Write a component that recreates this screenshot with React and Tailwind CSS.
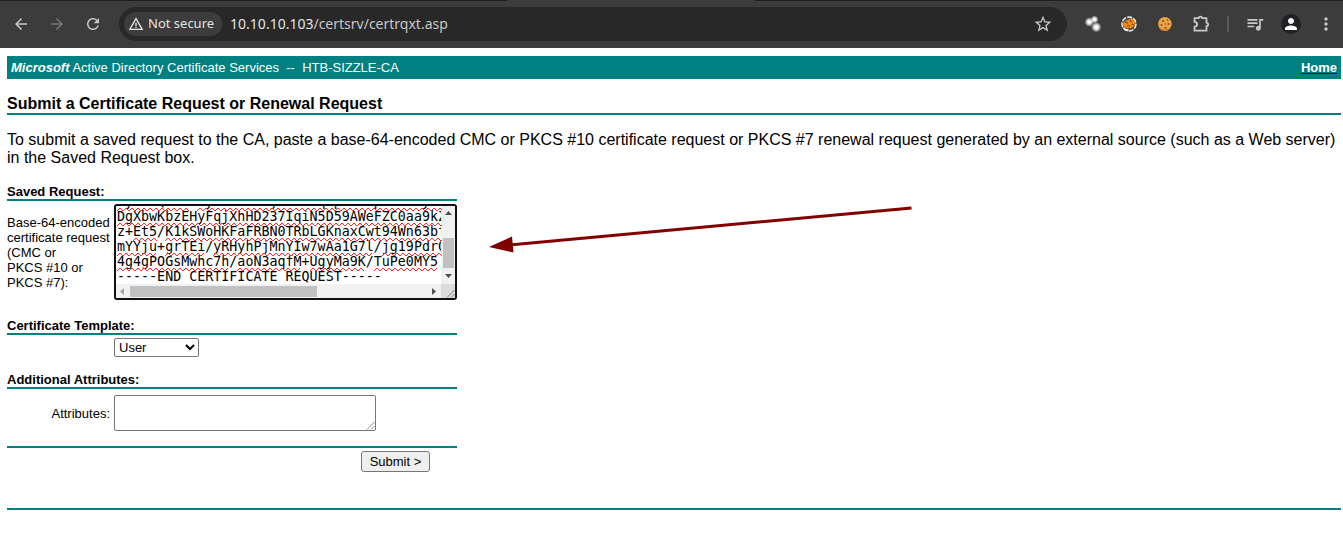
import { useEffect, useRef } from "react";
import { MdArrowBack, MdArrowForward, MdRefresh, MdWarningAmber, MdStarBorder, MdMoreVert, MdPerson, MdQueueMusic } from "react-icons/md";

const REQUEST_TEXT = [
  "-----BEGIN CERTIFICATE REQUEST-----",
  "MyX7bQzHT+dyKbTnR5WjaXeV1qZpLk8HpFzS3EydV",
  "DgXbwKbzEHyFqjXhHD237IqiN5D59AWeFZC0aa9kZ",
  "z+Et5/K1kSWoHKFaFRBN0TRbLGKnaxCwt94Wn63bf",
  "mYYju+grTEi/yRHyhPjMnYIw7wAa1G7l/jg19Pdr0",
  "4g4gPOGsMwhc7h/aoN3aqfM+UgyMa9K/TuPe0MY5",
  "-----END CERTIFICATE REQUEST-----",
].join("\n");

// Misspelled runs per line, as [first column, end column].
const SPELLING = [
  [[0, 9], [10, 41]],
  [[0, 41]],
  [[2, 5], [6, 41]],
  [[0, 5], [6, 11], [12, 32], [33, 41]],
  [[0, 14], [15, 23], [24, 31], [32, 40]],
];

function squiggle(start, end, y) {
  const x0 = Math.round(start * 8.03);
  const x1 = Math.round(end * 8.03);
  let d = `M${x0} ${y + 3}`;
  let up = true;
  for (let x = x0 + 3; x <= x1; x += 3) {
    d += `L${x} ${up ? y : y + 3}`;
    up = !up;
  }
  return d;
}

function IconButton({ label, children, dim }) {
  return (
    <button type="button" aria-label={label} className={`flex h-9 w-9 shrink-0 items-center justify-center ${dim ? "text-[#777777]" : "text-[#c7c7c7]"}`}>
      {children}
    </button>
  );
}

function Toolbar() {
  return (
    <header className="bg-[#3c3c3c]">
      <div className="flex h-px">
        <div className="w-[507px] bg-[#202020]" />
        <div className="w-[248px]" />
        <div className="flex-1 bg-[#202020]" />
      </div>
      <div className="flex h-[47px] items-center pb-px pl-[3px] font-['Noto_Sans',sans-serif]">
        <IconButton label="Back"><MdArrowBack size={18} /></IconButton>
        <IconButton label="Forward" dim><MdArrowForward size={18} /></IconButton>
        <IconButton label="Reload"><MdRefresh size={18} /></IconButton>
        <div className="mx-2 flex h-[34px] min-w-0 flex-1 items-center rounded-full bg-[#282828] pl-[5px] pr-[6px]">
          <button type="button" className="flex h-6 shrink-0 items-center gap-1 rounded-full bg-[#3c3c3c] pl-1 pr-2 text-[13px] text-[#e3e3e3]">
            <MdWarningAmber size={16} />
            Not secure
          </button>
          <div className="min-w-0 flex-1 truncate pl-2 text-sm text-[#c7c7c7]">
            <span className="text-[#e3e3e3]">10.10.10.103</span>/certsrv/certrqxt.asp
          </div>
          <IconButton label="Bookmark this page"><MdStarBorder size={20} /></IconButton>
        </div>
        <IconButton label="Proxy extension">
          <svg width="18" height="18" viewBox="0 0 18 18">
            <defs>
              <radialGradient id="ball">
                <stop offset="0.3" stopColor="#ffffff" />
                <stop offset="1" stopColor="#ffffff" stopOpacity="0.25" />
              </radialGradient>
            </defs>
            <circle cx="10.5" cy="4.5" r="3.6" fill="url(#ball)" />
            <circle cx="5.3" cy="7" r="4.3" fill="url(#ball)" />
            <circle cx="12.3" cy="12.2" r="4.7" fill="url(#ball)" />
          </svg>
        </IconButton>
        <IconButton label="Browser extension">
          <svg width="16" height="16" viewBox="0 0 16 16">
            <circle cx="8" cy="8" r="7" fill="#4a4a4a" stroke="#f4f4f4" strokeWidth="1.4" strokeDasharray="5 1.2" />
            <path d="M1.5 8.5 4 5l4-1.5 3-2 1.5 3 2 2-.5 3-3 2-3 1.5-4-1.5z" fill="#f18a12" />
            <path d="m4 6 3 1M9 4l1.500 2M6 10l3-.5M11 8l2 1M9 12l-2 1.500" stroke="#713b0b" strokeWidth="1.200" />
            <path d="M2 10.500 5 13l3 .5-1 1.500-3-1z" fill="#fff" />
          </svg>
        </IconButton>
        <IconButton label="Cookie editor">
          <svg width="16" height="16" viewBox="0 0 16 16">
            <path d="M8 1c2 0 2.500.8 4 1.300.5 1.400 2.300 1.800 2.300 3.500.5 2 .8 3-.4 4.900C13 13.500 10.500 15 8 15s-5.500-1.500-6.300-4.500C.8 8 .9 5 3.300 2.800 4.700 1.500 6.500 1 8 1z" fill="#eba445" />
            <path d="M2 11c2 2.500 8 3.500 12 0-1.500 3-4 4-6 4s-5-1.300-6-4z" fill="#cf7d2c" />
            <g fill="#8a4817">
              <circle cx="6" cy="5" r="1" />
              <circle cx="10.500" cy="4" r=".8" />
              <circle cx="11.500" cy="8" r="1" />
              <circle cx="4.500" cy="9" r=".9" />
              <circle cx="8.200" cy="8" r=".7" />
              <circle cx="8.500" cy="11.800" r="1" />
            </g>
          </svg>
        </IconButton>
        <IconButton label="Extensions">
          <svg width="18" height="18" viewBox="0 0 18 18" fill="none" stroke="currentColor" strokeWidth="1.800" strokeLinejoin="round">
            <path d="M2.500 3.200h4.300c0-2.200 3.400-2.200 3.400 0h4.300v4.600c2.200 0 2.200 3.200 0 3.200v4.700h-12v-4c3.500-.2 3.500-4.600 0-4.800z" />
          </svg>
        </IconButton>
        <div className="flex w-[18px] shrink-0 justify-center"><div className="h-4 w-0.5 bg-[#5c5c5c]" /></div>
        <IconButton label="Media controls"><MdQueueMusic size={20} /></IconButton>
        <IconButton label="Profile">
          <span className="flex h-5 w-5 items-center justify-center rounded-full bg-[#202124] text-white"><MdPerson size={18} /></span>
        </IconButton>
        <button type="button" aria-label="Menu" className="flex h-9 w-[34px] shrink-0 items-center justify-center text-[#c7c7c7]"><MdMoreVert size={20} /></button>
      </div>
    </header>
  );
}

function SectionTitle({ children }) {
  return <h2 className="border-b-2 border-[#008080] text-[13px] leading-[15px] font-bold">{children}</h2>;
}

function ScrollArrow({ points, dim }) {
  return (
    <svg width="13" height="13" viewBox="0 0 13 13" className={dim ? "text-[#a3a3a3]" : "text-[#505050]"} aria-hidden="true">
      <polygon points={points} fill="currentColor" />
    </svg>
  );
}

function RequestBox() {
  const ref = useRef(null);
  useEffect(() => {
    ref.current.scrollTop = ref.current.scrollHeight;
  }, []);
  return (
    <div className="grid grid-cols-[1fr_14px] overflow-hidden rounded-[3px] border-2 border-[#101010]">
      <div className="relative h-[78px]">
        <textarea
          id="request"
          ref={ref}
          wrap="off"
          spellCheck={false}
          defaultValue={REQUEST_TEXT}
          className="block h-full w-full resize-none overflow-hidden bg-white px-px font-['DejaVu_Sans_Mono',monospace] text-[13.333px] leading-[15px] text-black outline-none"
        />
        <svg className="pointer-events-none absolute top-0 left-px h-full w-full" aria-hidden="true">
          {SPELLING.map((runs, row) =>
            runs.map(([a, b]) => (
              <path key={`${row}-${a}`} d={squiggle(a, b, row * 15 + 2)} fill="none" stroke="#ff2a2a" strokeWidth="1" />
            ))
          )}
        </svg>
      </div>
      <div className="flex flex-col items-center bg-[#f1f1f1] pb-px">
        <ScrollArrow points="3,9 10,9 6.5,5" />
        <div className="flex w-full flex-1 flex-col justify-end pr-px pb-0.5 pl-0.5">
          <div className="h-[30px] bg-[#c1c1c1]" />
        </div>
        <ScrollArrow points="3,4 10,4 6.5,8" />
      </div>
      <div className="flex h-[14px] items-center bg-[#f1f1f1] pr-px">
        <ScrollArrow dim points="8,3 8,10 4,6.500" />
        <div className="flex-1">
          <div className="ml-px h-[11px] w-[187px] bg-[#c1c1c1]" />
        </div>
        <ScrollArrow points="5,3 5,10 9,6.500" />
      </div>
      <div className="flex items-end justify-end bg-[#dcdcdc]"><ResizeGrip /></div>
    </div>
  );
}

function ResizeGrip() {
  return (
    <svg width="9" height="9" viewBox="0 0 9 9" fill="none" stroke="#6b6b6b" strokeWidth="0.8" aria-hidden="true">
      <path d="M1 8.500 8.500 1M5 8.500 8.500 5" />
    </svg>
  );
}

export default function App() {
  return (
    <div className="min-h-screen bg-white font-['Liberation_Sans',Arial,sans-serif] text-black">
      <Toolbar />
      <main className="relative pt-2 pr-0.5 pl-[7px]">
        <div className="flex h-[23px] items-center justify-between bg-[#008080] px-1 text-[13px] text-white">
          <div className="whitespace-pre"><b><i>Microsoft</i></b> Active Directory Certificate Services{"  --  "}HTB-SIZZLE-CA</div>
          <a href="#home" className="font-bold underline decoration-[#0000ee]">Home</a>
        </div>
        <h1 className="mt-4 border-b-2 border-[#008080] text-base leading-[18px] font-bold">Submit a Certificate Request or Renewal Request</h1>
        <p className="mt-4 text-base leading-[18px]">
          To submit a saved request to the CA, paste a base-64-encoded CMC or PKCS #10 certificate request or PKCS #7 renewal request generated by an external source (such as a Web server) in the Saved Request box.
        </p>
        <form className="mt-[17px] w-[450px] text-[13px] leading-[15px]" onSubmit={(e) => e.preventDefault()}>
          <SectionTitle>Saved Request:</SectionTitle>
          <div className="mt-[3px] grid grid-cols-[103px_1fr] items-center gap-x-1">
            <label htmlFor="request">
              Base-64-encoded<br />certificate request<br />(CMC or<br />PKCS #10 or<br />PKCS #7):
            </label>
            <RequestBox />
          </div>

          <div className="mt-[18px]"><SectionTitle><label htmlFor="template">Certificate Template:</label></SectionTitle></div>
          <div className="mt-[3px] grid grid-cols-[103px_1fr] gap-x-1">
            <select id="template" className="col-start-2 h-[19px] w-[85px] rounded-[2px] border border-[#767676] bg-white text-[13px]">
              <option>User</option>
              <option>Basic EFS</option>
            </select>
          </div>

          <div className="mt-[15px]"><SectionTitle>Additional Attributes:</SectionTitle></div>
          <div className="mt-1.5 grid grid-cols-[103px_1fr] items-center gap-x-1">
            <label htmlFor="attributes" className="text-right">Attributes:</label>
            <div className="relative h-9 w-[262px]">
              <textarea id="attributes" className="block h-full w-full resize-none rounded-[2px] border border-[#767676] bg-white p-0.5 font-['DejaVu_Sans_Mono',monospace]" />
              <div className="pointer-events-none absolute right-px bottom-px"><ResizeGrip /></div>
            </div>
          </div>

          <div className="mt-[15px] flex justify-end border-t-2 border-[#008080] pt-[3px] pr-[27px]">
            <button type="submit" className="h-[21px] w-[69px] rounded-[3px] border border-[#767676] bg-[#efefef] text-[13px]">Submit &gt;</button>
          </div>
        </form>
        <hr className="mt-9 border-t-2 border-[#008080]" />
        <svg className="pointer-events-none absolute top-[156px] left-[488px]" width="426" height="52" viewBox="488 204 426 52" aria-hidden="true">
          <path d="M911.500 208 512 244.700" stroke="#800000" strokeWidth="3" />
          <path d="M489 247 512 236.500 513.500 252.500z" fill="#800000" />
        </svg>
      </main>
    </div>
  );
}
